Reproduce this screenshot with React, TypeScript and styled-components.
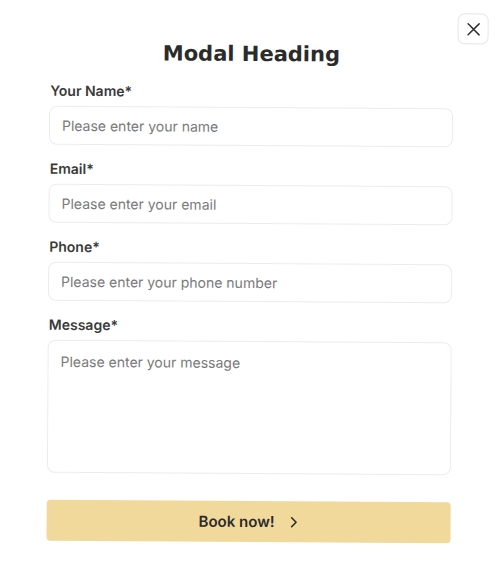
import React from "react";
import styled, { createGlobalStyle } from "styled-components";

const GlobalStyle = createGlobalStyle`
  html, body {
    margin: 0;
    padding: 0;
    background: #ffffff;
  }
  * {
    box-sizing: border-box;
  }
`;

const Modal = styled.div`
  position: relative;
  width: 500px;
  height: 584px;
  background: #ffffff;
  padding: 38px 48px 0 48px;
  font-family: Inter, "Noto Sans", sans-serif;
  transform: rotate(0.35deg);
`;

const CloseButton = styled.button`
  position: absolute;
  top: 12px;
  right: 13px;
  width: 31px;
  height: 31px;
  padding: 0;
  border: 1px solid #e6e6e6;
  border-radius: 7px;
  background: #ffffff;
  display: flex;
  align-items: center;
  justify-content: center;
  color: #333333;
  cursor: pointer;
`;

const Heading = styled.h2`
  margin: 0 0 12px 0;
  text-align: center;
  font-family: "DejaVu Sans", sans-serif;
  font-weight: 700;
  font-size: 21px;
  line-height: 32px;
  color: #2b2b2b;
`;

const Form = styled.form`
  display: flex;
  flex-direction: column;
  gap: 14px;
`;

const Field = styled.label`
  display: flex;
  flex-direction: column;
  gap: 5px;
`;

const LabelText = styled.span`
  font-size: 14px;
  line-height: 20px;
  font-weight: 600;
  color: #3a3a3a;
  padding-left: 1px;
`;

const Input = styled.input`
  width: 100%;
  height: 39px;
  padding: 0 12px;
  border: 1px solid #ececec;
  border-radius: 8px;
  font-family: Inter, "Noto Sans", sans-serif;
  font-size: 14px;
  color: #333333;
  outline: none;
  background: #ffffff;

  &::placeholder {
    color: #7a7a7a;
  }
`;

const TextArea = styled.textarea`
  width: 100%;
  height: 133px;
  padding: 11px 12px;
  border: 1px solid #ececec;
  border-radius: 8px;
  font-family: Inter, "Noto Sans", sans-serif;
  font-size: 14px;
  line-height: 20px;
  color: #333333;
  outline: none;
  resize: none;
  background: #ffffff;

  &::placeholder {
    color: #7a7a7a;
  }
`;

const SubmitButton = styled.button`
  margin-top: 13px;
  width: 100%;
  height: 41px;
  border: 0;
  border-radius: 4px;
  background: #f0d99b;
  display: flex;
  align-items: center;
  justify-content: center;
  gap: 14px;
  font-family: Inter, "Noto Sans", sans-serif;
  font-size: 15px;
  font-weight: 600;
  color: #2b2b2b;
  cursor: pointer;
`;

const CloseIcon = () => (
  <svg width="14" height="14" viewBox="0 0 14 14" fill="none">
    <path
      d="M1.5 1.5L12.5 12.5M12.5 1.5L1.5 12.5"
      stroke="currentColor"
      strokeWidth="1.5"
      strokeLinecap="round"
    />
  </svg>
);

const ChevronIcon = () => (
  <svg width="10" height="12" viewBox="0 0 10 12" fill="none">
    <path
      d="M3 1.5L7.5 6L3 10.5"
      stroke="currentColor"
      strokeWidth="1.6"
      strokeLinecap="round"
      strokeLinejoin="round"
    />
  </svg>
);

const fields = [
  { label: "Your Name*", placeholder: "Please enter your name", type: "text" },
  { label: "Email*", placeholder: "Please enter your email", type: "email" },
  { label: "Phone*", placeholder: "Please enter your phone number", type: "tel" }
];

export default function App() {
  return (
    <>
      <GlobalStyle />
      <Modal>
        <CloseButton type="button" aria-label="Close">
          <CloseIcon />
        </CloseButton>
        <Heading>Modal Heading</Heading>
        <Form onSubmit={e => e.preventDefault()}>
          {fields.map(field => (
            <Field key={field.label}>
              <LabelText>{field.label}</LabelText>
              <Input type={field.type} placeholder={field.placeholder} />
            </Field>
          ))}
          <Field>
            <LabelText>Message*</LabelText>
            <TextArea placeholder="Please enter your message" />
          </Field>
          <SubmitButton type="submit">
            Book now!
            <ChevronIcon />
          </SubmitButton>
        </Form>
      </Modal>
    </>
  );
}
